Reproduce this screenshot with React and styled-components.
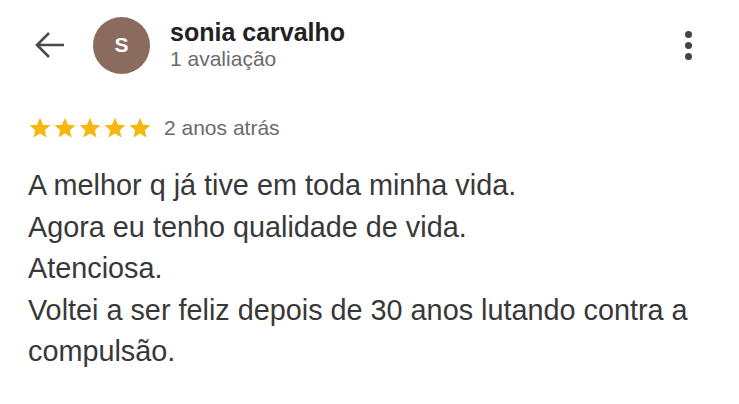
import React from 'react'
import styled, { createGlobalStyle } from 'styled-components'

const GlobalStyle = createGlobalStyle`
    html, body {
        margin: 0;
        padding: 0;
        background: #fff;
        font-family: "Liberation Sans", Arial, sans-serif;
    }
`
const Page = styled.div`
    width: 739px;
    height: 404px;
    overflow: hidden;
    background: #fff;
    padding: 17px 0 0 28px;
    box-sizing: border-box;
`
const Header = styled.div`
    display: flex;
    align-items: center;
    height: 56px;
`
const BackButton = styled.div`
    width: 31px;
    display: flex;
    align-items: center;
    margin-left: 6px;
    margin-right: 28px;
`
const Avatar = styled.div`
    width: 57px;
    height: 57px;
    border-radius: 50%;
    background: #8c6b5f;
    color: #fff;
    display: flex;
    align-items: center;
    justify-content: center;
    font-size: 21px;
    font-weight: 700;
    flex-shrink: 0;
`
const UserInfo = styled.div`
    display: flex;
    flex-direction: column;
    margin-left: 20px;
    flex: 1;
`
const UserName = styled.div`
    font-size: 25px;
    font-weight: 700;
    color: #222;
    line-height: 28px;
`
const UserMeta = styled.div`
    font-size: 21px;
    color: #6b6b6b;
    line-height: 26px;
`
const MenuButton = styled.div`
    display: flex;
    flex-direction: column;
    gap: 4px;
    margin-right: 47px;
`
const Dot = styled.span`
    width: 7px;
    height: 7px;
    border-radius: 50%;
    background: #444;
`
const RatingRow = styled.div`
    display: flex;
    align-items: center;
    height: 24px;
    margin-top: 43px;
`
const Stars = styled.div`
    display: flex;
    gap: 1px;
`
const When = styled.span`
    font-size: 21px;
    color: #6b6b6b;
    margin-left: 12px;
`
const ReviewText = styled.div`
    margin-top: 25px;
    font-size: 28.8px;
    line-height: 41.5px;
    color: #383838;
    width: 680px;
`

const Star = () => (
    <svg width="24" height="24" viewBox="0 0 24 24">
        <path fill="#f5b80f" d="M12 1.8l3 6.9 7.4.6-5.6 4.9 1.7 7.3L12 17.6l-6.5 3.9 1.7-7.3-5.6-4.9 7.4-.6z" />
    </svg>
)

const App = () => {
    return (
        <Page>
            <GlobalStyle />
            <Header>
                <BackButton>
                    <svg width="31" height="28" viewBox="0 0 31 28">
                        <path d="M30 14H3 M15 2L3 14l12 12" fill="none" stroke="#4a4a4a" strokeWidth="2.6" />
                    </svg>
                </BackButton>
                <Avatar>S</Avatar>
                <UserInfo>
                    <UserName>sonia carvalho</UserName>
                    <UserMeta>1 avaliação</UserMeta>
                </UserInfo>
                <MenuButton>
                    <Dot />
                    <Dot />
                    <Dot />
                </MenuButton>
            </Header>
            <RatingRow>
                <Stars>
                    {[0, 1, 2, 3, 4].map(i => <Star key={i} />)}
                </Stars>
                <When>2 anos atrás</When>
            </RatingRow>
            <ReviewText>
                A melhor q já tive em toda minha vida.<br />
                Agora eu tenho qualidade de vida.<br />
                Atenciosa.<br />
                Voltei a ser feliz depois de 30 anos lutando contra a compulsão.
            </ReviewText>
        </Page>
    )
}

export default App
